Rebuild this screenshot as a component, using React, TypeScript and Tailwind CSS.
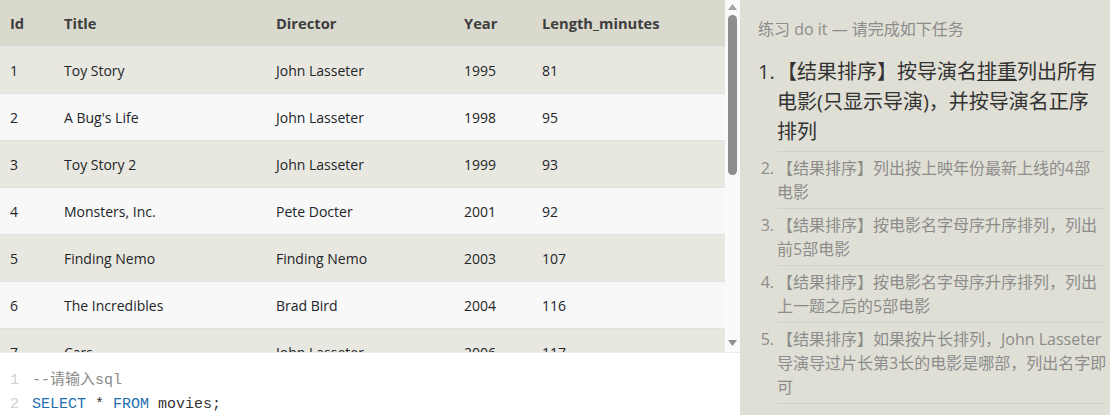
import React from "react";

const rows = [
  ["1", "Toy Story", "John Lasseter", "1995", "81"],
  ["2", "A Bug's Life", "John Lasseter", "1998", "95"],
  ["3", "Toy Story 2", "John Lasseter", "1999", "93"],
  ["4", "Monsters, Inc.", "Pete Docter", "2001", "92"],
  ["5", "Finding Nemo", "Finding Nemo", "2003", "107"],
  ["6", "The Incredibles", "Brad Bird", "2004", "116"],
  ["7", "Cars", "John Lasseter", "2006", "117"],
];

const cols = "grid grid-cols-[64px_212px_188px_78px_1fr] items-center";

function Item({ n, lines }: { n: number; lines: React.ReactNode[] }) {
  return (
    <li className="flex">
      <div className="w-[19px] shrink-0 pr-[3px] text-right pt-[4px] text-[16px] leading-[24px]">{n}.</div>
      <div className="flex-1 border-b border-[#d3d2c7] pt-[4px] pb-[4px] text-[16px] leading-[24px]">
        {lines.map((l, i) => (
          <div key={i} className="whitespace-nowrap">{l}</div>
        ))}
      </div>
    </li>
  );
}

export default function App() {
  return (
    <div className="flex h-[415px] w-[1110px] overflow-hidden" style={{ fontFamily: '"Open Sans", "Noto Sans CJK SC", sans-serif' }}>
      {/* left */}
      <div className="flex w-[740px] flex-col bg-white">
        <div className="flex h-[352px]">
          <div className="flex-1 overflow-hidden text-[14px] text-[#212529]">
            <div className={`${cols} h-[46px] bg-[#dad9cd] text-[14.7px] font-bold text-[#3d3d3d]`}>
              <div className="pl-[10px]">Id</div>
              <div>Title</div>
              <div>Director</div>
              <div>Year</div>
              <div>Length_minutes</div>
            </div>
            {rows.map((r, i) => (
              <div
                key={r[0]}
                className={`${cols} h-[47px] border-t border-[#dfe1e3] ${i % 2 === 0 ? "bg-[#e9e8e0]" : "bg-[#f8f8f8]"}`}
              >
                <div className="pl-[10px]">{r[0]}</div>
                <div>{r[1]}</div>
                <div>{r[2]}</div>
                <div>{r[3]}</div>
                <div>{r[4]}</div>
              </div>
            ))}
          </div>
          {/* scrollbar */}
          <div className="relative flex w-[15px] flex-col items-center bg-[#fafafa]">
            <svg width="9" height="6" viewBox="0 0 9 6" className="mt-[4px]">
              <polygon points="4.5,0 9,6 0,6" fill="#a3a3a3" />
            </svg>
            <div className="mt-[5px] h-[160px] w-[9px] rounded-full bg-[#8d8d8d]" />
            <div className="flex-1" />
            <svg width="9" height="6" viewBox="0 0 9 6" className="mb-[6px]">
              <polygon points="0,0 9,0 4.5,6" fill="#8d8d8d" />
            </svg>
          </div>
        </div>
        <div
          className="flex-1 border-t border-[#ececec] pt-[16px] text-[15px] leading-[24px]"
          style={{ fontFamily: '"Liberation Mono", "Noto Sans CJK SC", monospace' }}
        >
          <div className="flex">
            <span className="w-[32px] pl-[10px] text-[#d0d0d0]">1</span>
            <span className="text-[#8a8a8a]">--请输入sql</span>
          </div>
          <div className="flex">
            <span className="w-[32px] pl-[10px] text-[#d0d0d0]">2</span>
            <span className="text-[#333]">
              <span className="text-[#1d6fb0]">SELECT</span> * <span className="text-[#1d6fb0]">FROM</span> movies;
            </span>
          </div>
        </div>
      </div>
      {/* right */}
      <div className="w-[370px] bg-[#e0dfd5] pl-[18px] pr-[5px] pt-[17px]">
        <div className="text-[16px] leading-[24px] text-[#8c8c8c]">练习 do it — 请完成如下任务</div>
        <ol className="mt-[12px] text-[#8c8c8c]">
          <li className="flex text-[#333]">
            <div className="w-[19px] shrink-0 pr-[3px] pt-[4px] text-right text-[20px] leading-[30px]">1.</div>
            <div className="flex-1 border-b border-[#d3d2c7] pt-[4px] pb-[4px] text-[20px] leading-[30px]">
              <div className="whitespace-nowrap">
                【结果排序】按导演名<span className="inline-block border-b border-[#333] leading-[17px]">排重</span>列出所有
              </div>
              <div className="whitespace-nowrap">电影(只显示导演)，并按导演名正序</div>
              <div className="whitespace-nowrap">排列</div>
            </div>
          </li>
          <Item n={2} lines={["【结果排序】列出按上映年份最新上线的4部", "电影"]} />
          <Item n={3} lines={["【结果排序】按电影名字母序升序排列，列出", "前5部电影"]} />
          <Item n={4} lines={["【结果排序】按电影名字母序升序排列，列出", "上一题之后的5部电影"]} />
          <Item n={5} lines={["【结果排序】如果按片长排列，John Lasseter", "导演导过片长第3长的电影是哪部，列出名字即", "可"]} />
        </ol>
      </div>
    </div>
  );
}
